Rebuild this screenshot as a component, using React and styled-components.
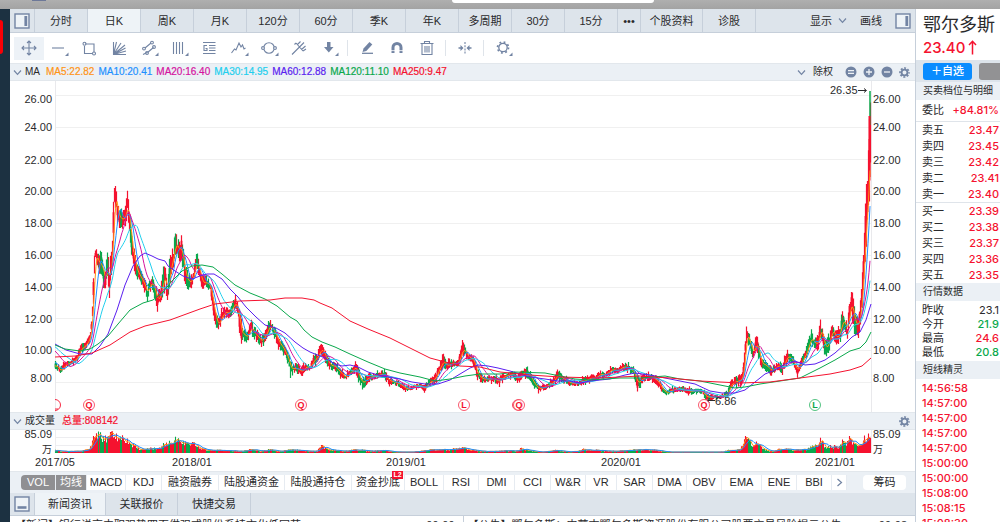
import React from "react";
import styled, { createGlobalStyle } from "styled-components";

const latin = '"Liberation Sans", "Noto Sans CJK SC", sans-serif';
const numeric = 'Inter, "Noto Sans CJK SC", sans-serif';

const c = {
  red: "#f5122f",
  green: "#0aa84c",
  ink: "#2a2a2c",
  icon: "#7284a3",
  bar: "#dde4eb",
  soft: "#ebf0f5",
  line: "#c6cfda",
  orange: "#ff9416",
  blue: "#1e90ff",
  magenta: "#d5149f",
  cyan: "#21cfee",
  violet: "#5a1ef0",
};

const Global = createGlobalStyle`
  *, *::before, *::after { box-sizing: border-box; }
  body { margin: 0; background: #fff; color: ${c.ink}; font: 11px/16px ${latin}; }
  button { border: 0; margin: 0; padding: 0; background: none; color: inherit; font: inherit; white-space: nowrap; cursor: pointer; }
  svg { display: block; }
`;

const Shell = styled.div`
  display: flex;
  flex-direction: column;
  height: 100vh;
  overflow: hidden;
`;
const TitleStrip = styled.header`
  flex: none;
  height: 9px;
  display: flex;
  align-items: flex-start;
  background: linear-gradient(#afafaf, #a3a3a3);
`;
const WindowMark = styled.span`
  width: 14px;
  height: 1px;
  margin-left: 32px;
  background: #6d7898;
`;
const SearchEdge = styled.span`
  width: 202px;
  height: 3px;
  margin-left: 406px;
  background: #fff;
  border-radius: 0 0 3px 3px;
`;
const Body = styled.div`
  flex: 1;
  min-height: 0;
  display: grid;
  grid-template-columns: 10px minmax(0, 1fr) 85px;
`;
const Rail = styled.nav`
  background: #1c3141;
  padding-top: 11px;
`;
const RailBadge = styled.span`
  display: block;
  width: 3px;
  height: 34px;
  background: #fb0006;
  border-radius: 0 3px 3px 0;
`;
const Main = styled.main`
  overflow: hidden;
`;

const TabBar = styled.div`
  display: flex;
  align-items: stretch;
  height: ${(p) => p.$h}px;
  background: ${c.bar};
  border-bottom: 1px solid ${c.line};
`;
const PanelToggle = styled.button`
  flex: none;
  width: ${(p) => p.$w}px;
  display: grid;
  place-items: center;
  border-right: ${(p) => (p.$edge ? `1px solid ${c.line}` : "0")};
`;
const Tab = styled.button`
  flex: none;
  width: ${(p) => p.$w || 53}px;
  border-right: 1px solid ${c.line};
  background: ${(p) => (p.$on ? "#eef3f7" : "transparent")};
`;
const TabBarEnd = styled.div`
  margin-left: auto;
  display: flex;
  align-items: center;
`;
const MenuButton = styled.button`
  display: flex;
  align-items: center;
  gap: 6px;
  margin-right: ${(p) => p.$gap}px;
`;

const Tools = styled.div`
  display: flex;
  align-items: center;
  height: 30px;
  padding-left: 4px;
  background: #fff;
`;
const Tool = styled.button`
  flex: none;
  width: 30px;
  height: 23px;
  display: grid;
  place-items: center;
  background: ${(p) => (p.$on ? "#edf2f7" : "transparent")};
`;
const ToolRule = styled.span`
  width: 1px;
  height: 16px;
  margin: 0 4px 0 3px;
  background: #dfe4ea;
`;

const IndicatorHead = styled.div`
  display: flex;
  align-items: center;
  height: 18px;
  padding: 0 5px 0 3px;
  background: ${c.soft};
  border-top: 1px solid #e2e7ec;
  border-bottom: 1px solid #e2e7ec;
  font-size: 10px;
`;
const HeadName = styled.button`
  display: flex;
  align-items: center;
  gap: 3px;
  margin-right: ${(p) => p.$gap}px;
  font-size: ${(p) => p.$size}px;
`;
const Reading = styled.span`
  margin-right: 4px;
  color: ${(p) => p.$color};
  -webkit-text-stroke: 0.2px ${(p) => p.$color};
  white-space: nowrap;
`;
const HeadEnd = styled.div`
  margin-left: auto;
  display: flex;
  align-items: center;
  gap: 6px;
`;
const Adjust = styled.button`
  display: flex;
  align-items: center;
  gap: 7px;
  margin-right: 6px;
`;

const ChartArt = styled.svg`
  width: 100%;
  height: auto;
  overflow: visible;
  font-family: ${latin};
  font-size: 11px;
`;

const IndicatorRow = styled.div`
  display: flex;
  align-items: center;
  height: 22px;
  padding-left: 11px;
  background: ${c.soft};
  border-top: 1px solid #e2e7ec;
`;
const Segment = styled.button`
  position: relative;
  flex: none;
  width: ${(p) => p.$w}px;
  height: 15px;
  line-height: 15px;
  background: ${(p) => (p.$on ? "#8f8f92" : "#fff")};
  color: ${(p) => (p.$on ? "#fff" : c.ink)};
  border-right: 1px solid #e6ebf1;
  display: grid;
  place-items: center;
  &:first-child { border-radius: 4px 0 0 4px; }
`;
const LevelBadge = styled.span`
  position: absolute;
  top: -4px;
  right: 1px;
  width: 11px;
  height: 8px;
  background: ${c.red};
  color: #fff;
  font: bold 7px/8px ${latin};
  text-align: center;
`;
const Chips = styled.button`
  width: 43px;
  height: 15px;
  line-height: 15px;
  margin-left: auto;
  margin-right: 9px;
  background: #fff;
  border-radius: 4px;
`;

const NewsGrid = styled.div`
  display: grid;
  grid-template-columns: 1fr 1fr;
`;
const NewsItem = styled.a`
  display: flex;
  justify-content: space-between;
  gap: 8px;
  padding: 1px 8px 0 4px;
  border-left: 1px solid ${(p) => (p.$rule ? c.line : "transparent")};
  color: ${c.ink};
  text-decoration: none;
  white-space: nowrap;
`;

const Side = styled.aside`
  border-left: 1px solid ${c.line};
  background: #fff;
  overflow: hidden;
  font-family: ${numeric};
`;
const StockHead = styled.div`
  height: 51px;
  padding: 3px 0 0 7px;
  white-space: nowrap;
`;
const StockName = styled.h1`
  margin: 0;
  font: 18px/26px ${latin};
`;
const StockPrice = styled.div`
  display: flex;
  align-items: center;
  gap: 3px;
  color: ${c.red};
  font-size: 15px;
  font-weight: 500;
  line-height: 19px;
`;
const Actions = styled.div`
  display: flex;
  align-items: center;
  gap: 7px;
  height: 22px;
  padding-left: 7px;
  background: ${c.bar};
  overflow: hidden;
`;
const Action = styled.button`
  flex: none;
  width: 49px;
  height: 17px;
  border-radius: 3px;
  background: ${(p) => (p.$muted ? "#929294" : "#0a8cff")};
  color: #fff;
  font-weight: 500;
  line-height: 16px;
`;
const SideTitle = styled.h2`
  margin: 0;
  padding-left: 7px;
  height: 18px;
  background: ${c.soft};
  font: 10px/18px ${latin};
  white-space: nowrap;
`;
const Quotes = styled.table`
  width: 100%;
  border-collapse: collapse;
  th { padding: 0 0 0 6px; font-weight: 400; text-align: left; white-space: nowrap; }
  td { padding: 0 1px 0 0; text-align: right; white-space: nowrap; }
`;
const QuoteBody = styled.tbody`
  border-bottom: ${(p) => (p.$rule ? "1px solid #dfe4ea" : "0")};
  &::before, &::after { content: ""; display: table-row; height: ${(p) => p.$pad || 0}px; }
`;
const QuoteRow = styled.tr`
  height: ${(p) => p.$h}px;
  line-height: ${(p) => p.$h}px;
  td { color: ${(p) => p.$color || c.red}; font-weight: ${(p) => (p.$plain ? 400 : 500)}; }
`;
const Alerts = styled.ol`
  list-style: none;
  margin: 0;
  padding: 2px 0 0 6px;
  color: ${c.red};
  font-weight: 500;
  line-height: 15px;
`;

/* ---------- icons ---------- */

const Chevron = ({ dir }) => (
  <svg width="9" height="9" viewBox="0 0 9 9" fill="none" stroke={c.icon} strokeWidth="1.2">
    <path d={dir === "right" ? "M2.5 1 6.5 4.5 2.5 8" : "M1 2.5 4.5 6.3 8 2.5"} />
  </svg>
);
const PanelIcon = ({ side }) => (
  <svg width="16" height="16" viewBox="0 0 16 16" fill="none" stroke={c.icon} strokeWidth="1.4">
    <rect x="1" y="1" width="14" height="14" fill="#eef3f7" />
    {side === "bottom" ? <path d="M3.5 11.5h9" strokeWidth="2.6" /> : <path d="M11.8 3v10" strokeWidth="2.8" />}
  </svg>
);
const Corner = () => <path d="M20.500 12.500V16H17z" fill={c.icon} stroke="none" />;
const Glyph = ({ children, corner }) => (
  <svg width="22" height="16" viewBox="0 0 22 16" fill="none" stroke={c.icon} strokeWidth="1.1">
    {children}
    {corner && <Corner />}
  </svg>
);
const Gear = ({ size = 11 }) => (
  <svg width={size} height={size} viewBox="0 0 12 12" fill="none" stroke={c.icon}>
    <circle cx="6" cy="6" r="3.2" strokeWidth="2" />
    <circle cx="6" cy="6" r="4.9" strokeWidth="1.8" strokeDasharray="2.2 1.65" strokeDashoffset="1.1" />
  </svg>
);
const Disc = ({ d }) => (
  <svg width="12" height="12" viewBox="0 0 12 12">
    <circle cx="6" cy="6" r="5.5" fill={c.icon} />
    <path d={d} stroke="#eef2f6" strokeWidth="1.3" />
  </svg>
);

const tools = [
  { name: "移动", on: true, art: <path d="M4 8h14M11 1v14M6 6 4 8l2 2M16 6l2 2-2 2M9 3l2-2 2 2M9 13l2 2 2-2" /> },
  { name: "直线", corner: true, art: <path d="M4 8h12" /> },
  { name: "矩形", art: <><path d="M7 4h9v8M14 13.500H6.500V6" /><circle cx="6.500" cy="3.800" r="1.500" /><circle cx="16" cy="13.500" r="1.500" /></> },
  { name: "扇形线", art: <path d="M5.500 2v12.500H18M5.500 14.500 8.500 2M5.500 14.500 13 3M5.500 14.500 17 5M5.500 14.500 17.500 8M5.500 14.500 18 11" /> },
  { name: "平行线", corner: true, art: <><path d="m7 8 6-5M9.500 12.500l6-5M5 14.500l4-2" /><circle cx="6" cy="8.600" r="1.400" /><circle cx="14" cy="2.600" r="1.400" /><circle cx="9" cy="13" r="1.400" /><circle cx="16" cy="7" r="1.400" /></> },
  { name: "竖线", corner: true, art: <path d="M5.500 2v12M8.500 2v12M11.500 2v12M14.500 2v12" /> },
  { name: "标注", art: <path d="M5 2.500h12.500M5 13.500h12.500M11 5.500h6.500M11 8h6.500M11 10.500h6.500M9 5.500H6v5h3V8.500H7.500" /> },
  { name: "波浪线", corner: true, art: <path d="m3.500 13 3-4 1.500 1 3-7 2 4 1.500-2 1.500 4 1.500-1" /> },
  { name: "圆", corner: true, art: <><circle cx="11" cy="8" r="5.300" /><circle cx="5" cy="8" r="1.400" fill="#fff" /><circle cx="17" cy="8" r="1.400" fill="#fff" /></> },
  { name: "叉线", art: <path d="m4 14.500 7.500-7.500M8 3l7 8M9.500 4.500 12.500 1.500M11.500 7l4.500-4.500M13.500 9.500 17.500 6M8 3 6.500 4.500M15 11l3-2" /> },
  { name: "箭头", corner: true, art: <path d="M9 2h3.500v5h3L10.800 12.500 6 7h3z" fill={c.icon} stroke="none" /> },
  "rule",
  { name: "画笔", art: <><path d="m6.500 12 1-3.500 6-6.500 2.800 2.500-6 6.500z" fill={c.icon} stroke="none" /><path d="M6 13.300h11" strokeWidth="1.300" /></> },
  { name: "磁铁", art: <><path d="M7 13V7.500a4 4 0 0 1 8 0V13" strokeWidth="3" /><path d="M5 10.600h4.500M12.500 10.600H17" stroke="#fff" strokeWidth="0.800" /></> },
  { name: "删除", art: <path d="M4.500 3.500h13M8.500 3.500v-2h5v2M6 3.500v11h10v-11M9 6v6.500M11 6v6.500M13 6v6.500" /> },
  "rule",
  { name: "间距", art: <><path d="M11 2v12" strokeDasharray="2 1.200" /><path d="M4.500 8h3.500M14 8h3.500" strokeWidth="1.600" /><path d="m9.500 8-3-3v6zM12.500 8l3-3v6z" fill={c.icon} stroke="none" /></> },
  "rule",
  { name: "设置", corner: true, art: <><circle cx="11" cy="7.500" r="4.200" strokeWidth="1.300" /><circle cx="11" cy="7.500" r="5.500" strokeWidth="1.700" strokeDasharray="1.800 2.520" /></> },
];

/* ---------- chart data ---------- */

const X0 = 55;
const X1 = 870;

// [x, top, bottom] of the traded range along the time axis
const range = [
  [55,362,369],[58,364,372],[60,367,376],[63,363,371],[66,361,367],[70,361,366],[74,357,363],[77,354,362],[79,345,356],[82,343,353],[86,340,349],[88,335,345],[90,330,342],
  [91,318,335],[92,300,325],[93,272,305],[94,250,280],[95,245,264],[97,252,266],[99,255,274],[101,250,276],[103,262,286],[105,270,292],[107,249,282],[109,262,302],
  [111,248,282],[112,230,262],[113,200,245],[114,176,212],[115,186,208],[117,196,226],[119,208,229],[121,208,229],[123,210,229],[125,205,228],[126,198,222],[127,192,215],[129,204,232],
  [130,216,248],[132,240,262],[134,248,272],[136,262,278],[139,268,283],[142,273,288],[145,280,296],[147,286,301],[149,280,292],[152,276,288],[154,282,297],[157,288,313],[160,289,303],
  [163,265,295],[165,265,289],[167,280,305],[169,260,291],[171,250,275],[173,247,268],[175,228,255],[177,236,260],[179,240,260],[181,232,262],[183,248,276],[185,262,287],[188,273,291],
  [191,274,289],[194,264,280],[196,251,270],[198,256,275],[200,266,286],[202,275,291],[206,276,289],[210,281,291],[212,290,310],[214,303,321],[216,313,328],[218,318,333],[221,309,325],
  [225,306,317],[228,308,320],[232,302,314],[235,296,309],[238,304,318],[240,314,347],[243,328,341],[247,331,343],[251,318,336],[254,326,340],[258,331,344],[261,336,347],[265,330,341],
  [268,321,336],[270,319,331],[272,324,334],[275,328,341],[279,337,350],[282,341,353],[285,347,359],[288,352,366],[290,359,379],[293,363,374],[297,363,374],[301,366,378],[305,363,371],
  [310,364,370],[313,354,367],[317,352,363],[320,341,358],[323,346,357],[326,353,365],[330,360,371],[334,362,370],[338,366,375],[342,371,379],[345,374,380],[349,370,377],[353,365,373],
  [355,361,373],[358,367,383],[362,377,390],[366,373,385],[370,373,381],[375,373,379],[380,371,378],[384,369,379],[388,376,385],[394,379,385],[400,381,388],[405,385,392],[409,387,391],
  [414,384,389],[420,383,388],[424,385,393],[428,379,387],[433,376,384],[436,371,381],[438,364,376],[441,359,371],[443,352,369],[446,361,371],[452,359,367],[457,361,367],[460,350,363],
  [462,340,358],[465,347,357],[468,354,361],[471,354,362],[474,357,369],[477,368,381],[482,375,383],[488,376,382],[493,375,382],[498,377,386],[503,373,381],[508,372,378],[513,371,378],
  [517,374,384],[522,370,378],[525,366,377],[530,372,381],[534,380,389],[539,386,392],[545,383,390],[552,379,387],[557,368,381],[563,376,382],[570,380,386],[577,381,386],[585,376,385],
  [590,374,382],[595,375,381],[600,370,378],[604,373,378],[608,369,375],[612,366,373],[617,368,374],[622,363,371],[628,364,371],[633,368,375],[637,374,393],[641,375,384],[645,373,381],
  [652,374,381],[657,376,386],[662,386,393],[666,390,396],[670,388,393],[676,387,392],[683,386,392],[690,388,395],[696,388,393],[702,389,394],[705,393,400],[712,395,400],[720,395,399],
  [727,390,398],[730,380,390],[734,377,387],[738,375,387],[742,372,385],[744,350,375],[746,320,345],[748,330,347],[750,337,352],[753,347,361],[756,330,354],[758,342,358],[761,358,369],
  [765,361,369],[771,366,376],[775,364,372],[778,360,370],[782,366,375],[785,353,366],[788,351,361],[791,354,364],[794,360,369],[797,366,376],[800,360,369],[803,353,363],[806,346,360],
  [808,339,352],[811,329,346],[814,338,349],[818,336,350],[820,316,339],[822,328,342],[825,340,358],[828,335,353],[830,330,345],[832,322,337],[836,331,346],[840,322,342],[842,307,332],
  [844,313,332],[847,324,339],[849,300,322],[851,288,316],[853,297,332],[855,312,336],[858,312,338],[860,298,328],[862,272,312],[863,250,290],[865,199,262],[867,165,240],[868,144,225],[870,92,178],
];
// [x, bar height]
const volume = [
  [55,3],[62,2],[78,2],[84,3],[88,4],[91,8],[94,23],[96,20],[99,20],[103,17],[108,16],[111,21],[114,21],[118,19],[122,17],[126,14],[130,11],[135,7],[140,4],[150,5],[160,5],[163,12],[170,12],[175,16],
  [180,13],[188,9],[194,11],[200,6],[208,3],[228,3],[240,2],[251,4],[260,2],[269,4],[280,2],[293,4],[307,2],[317,2],[320,9],[325,5],[335,3],[345,2],[356,4],[370,2],[383,3],[395,1],[412,1],
  [418,2],[434,4],[450,4],[460,6],[470,4],[480,2],[500,2],[505,3],[515,2],[521,5],[530,3],[540,1],[555,3],[570,1],[583,4],[600,3],[612,2],[625,3],[640,4],[655,3],[670,1],[720,1],[728,3],
  [740,4],[744,16],[746,21],[749,13],[753,7],[757,12],[762,5],[770,2],[778,4],[785,5],[795,3],[805,4],[812,7],[818,9],[820,14],[825,7],[832,8],[838,6],[842,13],[846,8],[849,17],[854,10],
  [858,7],[862,9],[864,23],[866,13],[868,18],[870,22],
];

const lerpAt = (rows, x, k) => {
  let i = 1;
  while (i < rows.length - 1 && rows[i][0] < x) i += 1;
  const a = rows[i - 1];
  const b = rows[i];
  const t = Math.min(1, Math.max(0, (x - a[0]) / (b[0] - a[0])));
  return a[k] + (b[k] - a[k]) * t;
};
const noise = (n) => {
  const v = Math.sin(n * 127.1 + 11.7) * 43758.5453;
  return v - Math.floor(v);
};

const days = [];
for (let x = X0; x <= X1; x += 1) {
  const top = lerpAt(range, x, 1);
  const bottom = lerpAt(range, x, 2);
  const span = bottom - top;
  const rising = lerpAt(range, x + 2, 1) < lerpAt(range, x - 2, 1);
  days.push({
    x,
    top: top + span * 0.4 * noise(x) ** 2 - (noise(x * 3.1) > 0.9 ? 2 : 0),
    bottom: bottom - span * 0.4 * noise(x + 0.37) ** 2 + (noise(x * 4.3) > 0.9 ? 2 : 0),
    mid: (top + bottom) / 2,
    up: noise(Math.floor(x / 2) * 1.7) < (rising ? 0.78 : 0.48),
    vol: Math.max(1, lerpAt(volume, x, 1) * (0.6 + 0.5 * noise(x * 2.3))),
  });
}
const candlePath = (up) =>
  days.filter((d) => d.up === up).map((d) => `M${d.x + 0.5} ${d.top.toFixed(1)}V${d.bottom.toFixed(1)}`).join("");
const bodyPath = (up) =>
  days
    .filter((d, i) => d.up === up && i % 2 === 0)
    .map((d) => `M${d.x + 0.5} ${(d.mid - (d.bottom - d.top) * 0.25).toFixed(1)}V${(d.mid + (d.bottom - d.top) * 0.25).toFixed(1)}`)
    .join("");
const volumePath = (up) =>
  days.filter((d) => d.up === up).map((d) => `M${d.x + 0.5} 453V${(453 - d.vol).toFixed(1)}`).join("");

const average = (size, pick, before) =>
  days
    .map((d, i) => {
      let sum = 0;
      for (let k = 0; k < size; k += 1) sum += i - k >= 0 ? pick(days[i - k]) : before;
      return `${i ? "L" : "M"}${d.x} ${(sum / size).toFixed(1)}`;
    })
    .join("");
const mid = (d) => d.mid;
const volTop = (d) => 453 - d.vol;
const trace = (pts) => `M${pts.map((p) => p.join(" ")).join("L")}`;

const ma60 = [[55,344],[66,350],[80,354],[92,354],[100,346],[108,334],[117,310],[125,285],[133,266],[140,256],[145,253],[152,256],[158,259],[165,261],[168,266],[175,271],[183,276],[192,279],[200,276],[207,274],[214,274],[222,279],[230,289],[238,297],[246,307],[256,317],[265,325],[276,328],[285,333],[295,342],[303,348],[310,352],[325,358],[335,364],[342,366],[350,365],[358,367],[368,372],[378,375],[388,377],[400,379],[412,382],[425,384],[438,384],[450,380],[460,374],[470,368],[478,365],[488,366],[498,368],[510,371],[520,374],[530,377],[545,379],[558,381],[570,381],[580,383],[590,381],[610,379],[625,375],[635,373],[650,375],[665,378],[680,381],[695,384],[710,391],[722,393],[735,393],[745,390],[755,382],[765,374],[775,370],[785,364],[795,361],[805,365],[815,364],[825,360],[835,353],[845,344],[852,337],[860,332],[866,320],[871,304]];
const ma120 = [[55,345],[65,349],[80,351],[90,349],[98,344],[108,336],[118,324],[130,310],[143,303],[153,300],[163,292],[172,281],[182,271],[192,266],[202,265],[213,267],[222,274],[235,285],[250,293],[265,299],[277,306],[290,317],[297,321],[304,330],[312,337],[322,342],[335,347],[350,354],[368,362],[385,369],[400,373],[420,377],[435,381],[450,379],[465,376],[480,374],[500,374],[515,372],[545,373],[560,376],[575,379],[590,380],[620,378],[640,378],[665,376],[680,379],[700,381],[720,385],[735,388],[745,387],[760,384],[780,381],[800,378],[820,368],[835,360],[850,351],[860,348],[866,342],[871,332]];
const ma250 = [[55,357],[75,356],[92,353],[110,345],[130,332],[145,326],[170,320],[200,309],[215,304],[240,301],[270,300],[285,298],[302,298],[314,300],[320,303],[332,308],[350,321],[368,329],[390,338],[410,348],[430,358],[445,362],[460,366],[480,367],[500,372],[530,375],[560,377],[600,378],[640,376],[670,378],[700,381],[740,383],[770,382],[800,378],[830,374],[850,370],[862,366],[871,358]];

const grid = [95, 127, 159, 191, 223, 255, 287, 318, 350, 382];
const priceLabels = [
  ["26.00", 103], ["24.00", 131], ["22.00", 164], ["20.00", 195], ["18.00", 227],
  ["16.00", 259], ["14.00", 291], ["12.00", 323], ["10.00", 354], ["8.00", 382],
];
const events = [
  [89, "Q", c.red], [301, "Q", c.red], [464, "L", c.red], [519, "Q", c.red], [704, "Q", c.red], [815, "L", c.green],
];

const PriceChart = () => (
  <ChartArt viewBox="10 81 905 331" role="img" aria-label="日K线图">
    <g stroke="#f0f0f0">
      {grid.map((y) => <path key={y} d={`M55 ${y + 0.5}H871`} />)}
      <path d="M55.5 81V412M871.500 81V412" stroke="#e9e9ec" />
    </g>
    <path d={candlePath(false)} stroke={c.green} strokeWidth="1.200" />
    <path d={candlePath(true)} stroke={c.red} strokeWidth="1.200" />
    <path d={bodyPath(false)} stroke={c.green} strokeWidth="1.800" />
    <path d={bodyPath(true)} stroke={c.red} strokeWidth="1.800" />
    <path d="M870 91V125" stroke={c.green} strokeWidth="1.500" />
    <path d="M869.500 116V177" stroke={c.red} strokeWidth="2" />
    <g fill="none" strokeWidth="1">
      <path d={average(4, mid, 366)} stroke={c.orange} />
      <path d={average(8, mid, 362)} stroke={c.blue} />
      <path d={average(16, mid, 350)} stroke={c.magenta} />
      <path d={average(25, mid, 346)} stroke={c.cyan} />
      <path d={trace(ma60)} stroke={c.violet} />
      <path d={trace(ma120)} stroke={c.green} />
      <path d={trace(ma250)} stroke={c.red} />
    </g>
    <g fill={c.ink}>
      {priceLabels.map(([t, y]) => (
        <React.Fragment key={t}>
          <text x="52" y={y} textAnchor="end">{t}</text>
          <text x="873" y={y}>{t}</text>
        </React.Fragment>
      ))}
      <text x="830" y="94">26.35</text>
      <text x="715" y="405">6.86</text>
      <path d="M858 90.500H866M864 88.500l2.500 2-2.500 2M715 400.500H707M709.500 398.500l-2.500 2 2.500 2" fill="none" stroke={c.ink} />
    </g>
    <path d="M55 399.500a5.500 5.500 0 0 1 0 11M55 409h3" fill="none" stroke={c.red} strokeWidth="0.900" />
    <circle cx="517.500" cy="405" r="5" fill="none" stroke={c.red} strokeWidth="0.800" />
    {events.map(([x, t, color]) => (
      <g key={x}>
        <circle cx={x} cy="405" r="5.500" fill="#fff" fillOpacity="0.700" stroke={color} strokeWidth="0.700" />
        <text x={x} y="408" fontSize="9" fontWeight="bold" textAnchor="middle" fill={color}>{t}</text>
      </g>
    ))}
  </ChartArt>
);

const dates = [["2017/05", 55], ["2018/01", 192], ["2019/01", 406], ["2020/01", 621], ["2021/01", 835]];

const VolumeChart = () => (
  <ChartArt viewBox="10 430 905 41" role="img" aria-label="成交量图">
    <path d="M55 437.500H871M55 445.500H871M55.500 430V453M871.500 430V453" stroke="#ededf0" />
    <path d={volumePath(false)} stroke={c.green} strokeWidth="1.100" />
    <path d={volumePath(true)} stroke={c.red} strokeWidth="1.100" />
    <g fill="none">
      <path d={average(4, volTop, 451)} stroke={c.orange} />
      <path d={average(9, volTop, 451)} stroke={c.blue} />
    </g>
    <g fill={c.ink}>
      <text x="52" y="438" textAnchor="end">85.09</text>
      <text x="52" y="453" textAnchor="end" fontSize="10">万</text>
      <text x="873" y="438">85.09</text>
      <text x="873" y="453" fontSize="10">万</text>
      {dates.map(([t, x]) => <text key={t} x={x} y="466" textAnchor="middle">{t}</text>)}
    </g>
  </ChartArt>
);

/* ---------- page ---------- */

const periods = [
  ["分时"], ["日K"], ["周K"], ["月K"], ["120分"], ["60分"], ["季K"], ["年K"], ["多周期"], ["30分"], ["15分"], ["•••", 23], ["个股资料", 62], ["诊股", 53],
];
const readings = [
  ["MA5:22.82", c.orange], ["MA10:20.41", c.blue], ["MA20:16.40", c.magenta], ["MA30:14.95", c.cyan],
  ["MA60:12.88", c.violet], ["MA120:11.10", c.green], ["MA250:9.47", c.red],
];
const indicators = [
  ["VOL", 35], ["均线", 31], ["MACD", 39], ["KDJ", 36], ["融资融券", 57], ["陆股通资金", 66], ["陆股通持仓", 67], ["资金抄底", 53],
  ["BOLL", 39], ["RSI", 35], ["DMI", 36], ["CCI", 36], ["W&R", 35], ["VR", 31], ["SAR", 36], ["DMA", 34], ["OBV", 35], ["EMA", 40], ["ENE", 35], ["BBI", 35],
];
const asks = [["卖五", "23.47"], ["卖四", "23.45"], ["卖三", "23.42"], ["卖二", "23.41"], ["卖一", "23.40"]];
const bids = [["买一", "23.39"], ["买二", "23.38"], ["买三", "23.37"], ["买四", "23.36"], ["买五", "23.35"]];
const market = [["昨收", "23.1", c.ink], ["今开", "21.9", c.green], ["最高", "24.6", c.red], ["最低", "20.8", c.green]];
const alerts = ["14:56:58", "14:57:00", "14:57:00", "14:57:00", "14:57:00", "15:00:00", "15:00:00", "15:08:00", "15:08:15", "15:08:30"];

export default function App() {
  return (
    <Shell>
      <Global />
      <TitleStrip><WindowMark /><SearchEdge /></TitleStrip>
      <Body>
        <Rail><RailBadge /></Rail>
        <Main>
          <TabBar $h={24}>
            <PanelToggle $w={25} $edge aria-label="左侧栏"><PanelIcon /></PanelToggle>
            {periods.map(([t, w], i) => <Tab key={t} $w={w} $on={i === 1}>{t}</Tab>)}
            <TabBarEnd>
              <MenuButton $gap={13}>显示<Chevron /></MenuButton>
              <MenuButton $gap={9}>画线</MenuButton>
              <PanelToggle $w={24} aria-label="右侧栏"><PanelIcon /></PanelToggle>
            </TabBarEnd>
          </TabBar>
          <Tools>
            {tools.map((t, i) =>
              t === "rule" ? <ToolRule key={i} /> : (
                <Tool key={i} $on={t.on} aria-label={t.name}><Glyph corner={t.corner}>{t.art}</Glyph></Tool>
              )
            )}
          </Tools>
          <IndicatorHead>
            <HeadName $gap={6} $size={10}><Chevron />MA</HeadName>
            {readings.map(([t, color]) => <Reading key={t} $color={color}>{t}</Reading>)}
            <HeadEnd>
              <Adjust><Chevron />除权</Adjust>
              <button aria-label="重置"><Disc d="M3 4.700h6M3 7.300h6" /></button>
              <button aria-label="放大"><Disc d="M3 6h6M6 3v6" /></button>
              <button aria-label="缩小"><Disc d="M3 6h6" /></button>
              <button aria-label="主图设置"><Gear /></button>
            </HeadEnd>
          </IndicatorHead>
          <PriceChart />
          <IndicatorHead>
            <HeadName $gap={7} $size={10}><Chevron />成交量</HeadName>
            <Reading $color={c.red}>总量:808142</Reading>
            <HeadEnd><button aria-label="副图设置"><Gear /></button></HeadEnd>
          </IndicatorHead>
          <VolumeChart />
          <IndicatorRow>
            {indicators.map(([t, w], i) => (
              <Segment key={t} $w={w} $on={i < 2}>{t}{t === "资金抄底" && <LevelBadge>L2</LevelBadge>}</Segment>
            ))}
            <Segment $w={15} aria-label="更多指标"><Chevron dir="right" /></Segment>
            <Chips>筹码</Chips>
          </IndicatorRow>
          <TabBar $h={23}>
            <PanelToggle $w={25} $edge aria-label="底部栏"><PanelIcon side="bottom" /></PanelToggle>
            <Tab $w={71} $on>新闻资讯</Tab>
            <Tab $w={72}>关联报价</Tab>
            <Tab $w={73}>快捷交易</Tab>
          </TabBar>
          <NewsGrid>
            <NewsItem href="#news"><span>【新闻】铝行说京中职强势四页供强或股份系持市化低同苏</span><span>09-09</span></NewsItem>
            <NewsItem href="#notice" $rule><span>【公告】鄂尔多斯：内蒙古鄂尔多斯资源股份有限公司股票交易风险提示公告</span><span>09-08</span></NewsItem>
          </NewsGrid>
        </Main>
        <Side>
          <StockHead>
            <StockName>鄂尔多斯</StockName>
            <StockPrice>
              23.40
              <svg width="9" height="15" viewBox="0 0 9 15" fill="none" stroke={c.red} strokeWidth="1.500"><path d="M4.500 14.500V1.500M1 5l3.500-3.700L8 5" /></svg>
            </StockPrice>
          </StockHead>
          <Actions><Action>＋自选</Action><Action $muted aria-label="交易" /></Actions>
          <SideTitle>买卖档位与明细</SideTitle>
          <Quotes>
            <QuoteBody $rule>
              <QuoteRow $h={21}><th scope="row">委比</th><td>+84.81%</td></QuoteRow>
            </QuoteBody>
            <QuoteBody $rule>
              {asks.map(([n, v]) => <QuoteRow key={n} $h={16}><th scope="row">{n}</th><td>{v}</td></QuoteRow>)}
            </QuoteBody>
            <QuoteBody>
              {bids.map(([n, v]) => <QuoteRow key={n} $h={16}><th scope="row">{n}</th><td>{v}</td></QuoteRow>)}
            </QuoteBody>
          </Quotes>
          <SideTitle>行情数据</SideTitle>
          <Quotes>
            <QuoteBody $pad={2}>
              {market.map(([n, v, color]) => <QuoteRow key={n} $h={14} $plain={color === c.ink} $color={color}><th scope="row">{n}</th><td>{v}</td></QuoteRow>)}
            </QuoteBody>
          </Quotes>
          <SideTitle>短线精灵</SideTitle>
          <Alerts>{alerts.map((t, i) => <li key={i}>{t}</li>)}</Alerts>
        </Side>
      </Body>
    </Shell>
  );
}
